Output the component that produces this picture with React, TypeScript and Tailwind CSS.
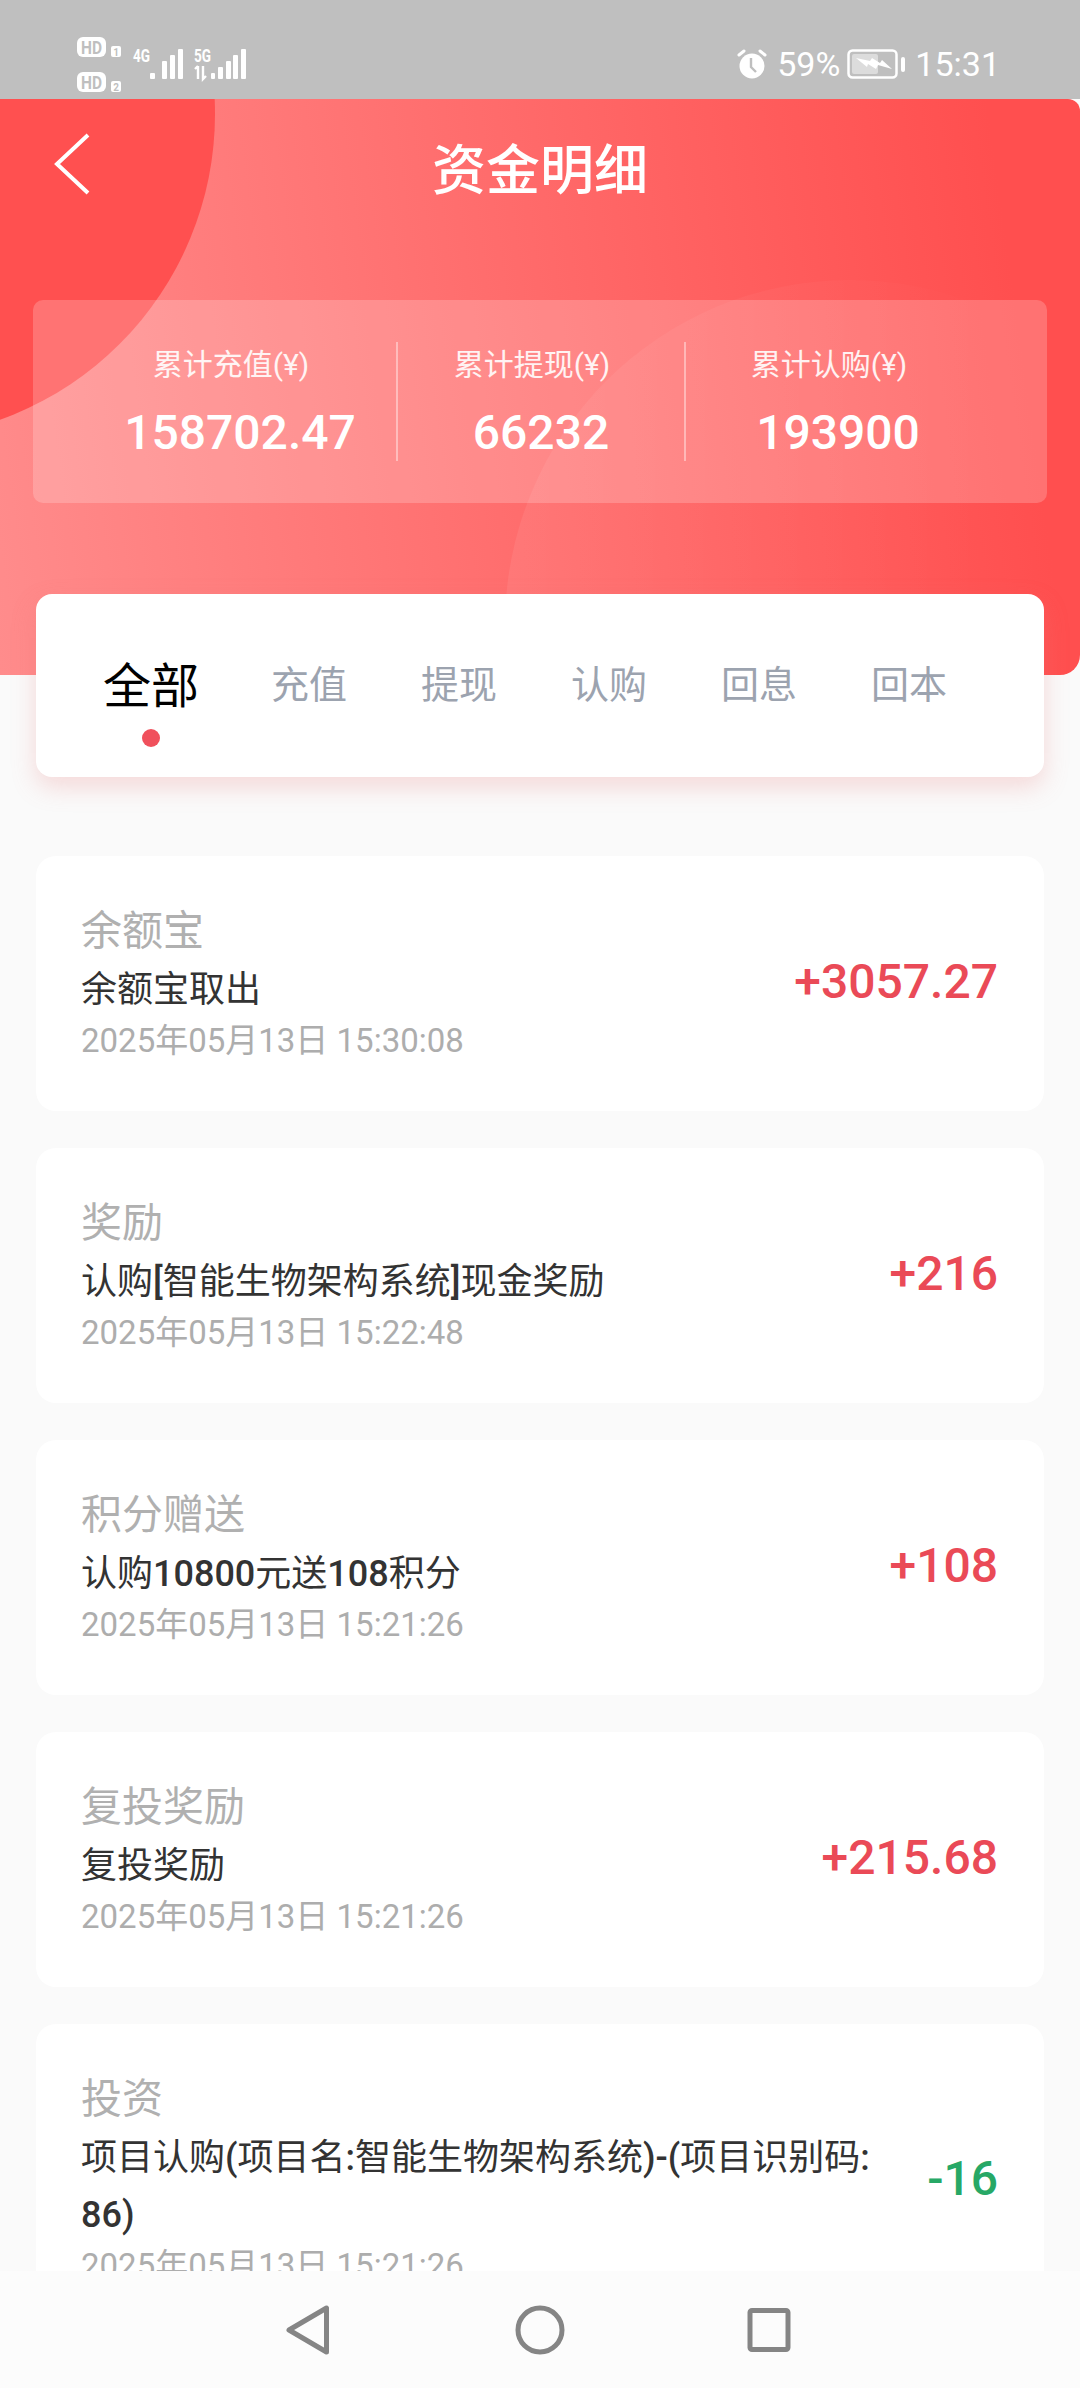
const font = { fontFamily: "Roboto, 'Noto Sans CJK SC', sans-serif" };

const stats = [
  { label: "累计充值(¥)", value: "158702.47" },
  { label: "累计提现(¥)", value: "66232" },
  { label: "累计认购(¥)", value: "193900" },
];

const tabs = ["充值", "提现", "认购", "回息", "回本"];

const records = [
  { title: "余额宝", desc: "余额宝取出", date: "2025年05月13日 15:30:08", amount: "+3057.27" },
  { title: "奖励", desc: "认购[智能生物架构系统]现金奖励", date: "2025年05月13日 15:22:48", amount: "+216" },
  { title: "积分赠送", desc: "认购10800元送108积分", date: "2025年05月13日 15:21:26", amount: "+108" },
  { title: "复投奖励", desc: "复投奖励", date: "2025年05月13日 15:21:26", amount: "+215.68" },
  { title: "投资", desc: "项目认购(项目名:智能生物架构系统)-(项目识别码:\n86)", date: "2025年05月13日 15:21:26", amount: "-16" },
];

// latin runs in the description sit a weight above the chinese
function Desc({ text }: { text: string }) {
  return (
    <>
      {text.split(/([\x20-\x7e]+)/).map((part, i) =>
        i % 2 === 1 ? <span key={i} className="font-medium">{part}</span> : part
      )}
    </>
  );
}

function SimIcons() {
  return (
    <svg width="170" height="60" viewBox="0 0 170 60" fill="white" style={{ fontFamily: "Roboto, sans-serif" }}>
      <rect x="0" y="0" width="29" height="20" rx="6" />
      <text x="4" y="16.5" textLength="21" lengthAdjust="spacingAndGlyphs" fontSize="18" fontWeight="700" fill="#bfbfbf">HD</text>
      <rect x="34" y="9" width="10" height="11" rx="2" />
      <text x="39" y="18.5" textAnchor="middle" fontSize="10" fontWeight="700" fill="#bfbfbf">1</text>
      <rect x="0" y="35" width="29" height="20" rx="6" />
      <text x="4" y="51.5" textLength="21" lengthAdjust="spacingAndGlyphs" fontSize="18" fontWeight="700" fill="#bfbfbf">HD</text>
      <rect x="34" y="44" width="10" height="11" rx="2" />
      <text x="39" y="53.5" textAnchor="middle" fontSize="10" fontWeight="700" fill="#bfbfbf">2</text>
      <text x="56" y="25" textLength="17" lengthAdjust="spacingAndGlyphs" fontSize="19" fontWeight="700">4G</text>
      <rect x="73" y="36" width="5" height="6" rx="1" />
      <rect x="85" y="24" width="5" height="18" rx="1" />
      <rect x="93" y="18" width="5" height="24" rx="1" />
      <rect x="101" y="12" width="5" height="30" rx="1" />
      <text x="117" y="25" textLength="17" lengthAdjust="spacingAndGlyphs" fontSize="19" fontWeight="700">5G</text>
      <path d="M121 29v13M118 32l3-3M126 29v13l3-3" stroke="white" strokeWidth="2.4" fill="none" />
      <rect x="134" y="36" width="4" height="6" rx="1" />
      <rect x="141" y="30" width="5" height="12" rx="1" />
      <rect x="149" y="24" width="5" height="18" rx="1" />
      <rect x="156" y="18" width="5" height="24" rx="1" />
      <rect x="164" y="12" width="5" height="30" rx="1" />
    </svg>
  );
}

function AlarmIcon() {
  return (
    <svg width="30" height="30" viewBox="0 0 30 30">
      <circle cx="15" cy="17" r="12.5" fill="white" />
      <path d="M14 9v9l5 5" stroke="#bfbfbf" strokeWidth="2.4" fill="none" />
      <path d="M2 6l5-4M28 6l-5-4" stroke="white" strokeWidth="3" strokeLinecap="round" fill="none" />
    </svg>
  );
}

function BatteryIcon() {
  return (
    <svg width="59" height="30" viewBox="0 0 59 30">
      <rect x="1.5" y="1.5" width="48" height="27" rx="4" fill="none" stroke="white" strokeWidth="2.5" />
      <rect x="5" y="5" width="26" height="20" rx="2" fill="white" opacity="0.45" />
      <rect x="54" y="8" width="4" height="15" rx="2" fill="white" />
      <path d="M9 9l14 3 2-3 8 5 2-3 10 9-14-4-2 4-8-5-1 3z" fill="white" />
    </svg>
  );
}

export default function App() {
  return (
    <div className="flex h-[2388px] w-[1080px] flex-col overflow-hidden bg-[#fafafa]" style={font}>
      <div className="flex h-[99px] shrink-0 items-start justify-between bg-[#bfbfbf] pl-[77px] pr-[80px] pt-[37px] text-white">
        <SimIcons />
        <div className="mt-[12px] flex items-center text-[34px] leading-[30px]">
          <AlarmIcon />
          <span className="ml-[10px]">59%</span>
          <span className="ml-[7px]"><BatteryIcon /></span>
          <span className="ml-[9px]">15:31</span>
        </div>
      </div>

      <div className="relative -mb-px h-[576px] shrink-0 overflow-hidden rounded-br-[20px] rounded-tr-[12px] bg-[linear-gradient(82deg,#ff8c8c_0%,#ff6e6e_45%,#ff4f4f_92%)]">
        <div className="absolute left-[-435px] top-[-310px] h-[650px] w-[650px] rounded-full bg-[#ff5050]" />
        <div className="absolute left-[505px] top-[181px] h-[690px] w-[690px] rounded-full bg-[linear-gradient(90deg,rgba(255,255,255,0.07),rgba(255,255,255,0)_70%)]" />

        <div className="relative flex h-[144px] items-center justify-center text-white">
          <svg className="absolute left-[52px] top-[34px]" width="40" height="62" viewBox="0 0 40 62" fill="none" stroke="white" strokeWidth="4">
            <path d="M36 2L5 31l31 29" />
          </svg>
          <span className="text-[54px] font-medium">资金明细</span>
        </div>

        <div className="relative mx-[33px] mt-[57px] grid h-[203px] grid-cols-[363px_288px_1fr] items-center rounded-[10px] bg-white/20">
          {stats.map((s, i) => (
            <div key={s.label} className={i === 0 ? "flex h-[119px] flex-col items-center justify-center pl-[51px] pt-[4px]" : i === 1 ? "flex h-[119px] flex-col items-center justify-center border-l-2 border-white/40 pt-[4px]" : "flex h-[119px] flex-col items-center justify-center border-l-2 border-white/40 pr-[57px] pt-[4px]"}>
              <span className="pr-[18px] text-[30px] leading-[40px] text-white/90">{s.label}</span>
              <span className="mt-[18px] text-[48px] font-medium leading-[60px] text-white">{s.value}</span>
            </div>
          ))}
        </div>
      </div>

      <div className="relative z-10 mx-[36px] -mt-[80px] flex h-[183px] shrink-0 items-start rounded-[16px] bg-white pl-[67px] pt-[63px] shadow-[0_10px_24px_rgba(230,120,120,0.25)]">
        <div className="flex w-[96px] flex-col items-center">
          <span className="whitespace-nowrap text-[48px] leading-[60px] text-black">全部</span>
          <span className="mt-[12px] h-[18px] w-[18px] rounded-full bg-[#f0505c]" />
        </div>
        <div className="ml-[72px] flex gap-[74px] pt-[5px]">
          {tabs.map((t) => (
            <span key={t} className="whitespace-nowrap text-[38px] leading-[46px] text-[#9ca3af]">{t}</span>
          ))}
        </div>
      </div>

      <div className="mx-[36px] mt-[79px] flex min-h-0 flex-1 flex-col gap-[37px] overflow-hidden">
        {records.map((r) => (
          <div key={r.date + r.title} className="flex shrink-0 items-center rounded-[20px] bg-white pb-[48px] pl-[45px] pr-[46px] pt-[45px]">
            <div className="min-w-0 flex-1 pr-[30px]">
              <div className="text-[41px] leading-[61px] text-[#b0b0b0]">{r.title}</div>
              <div className="whitespace-pre-line text-[36px] leading-[57px] text-[#333333]"><Desc text={r.desc} /></div>
              <div className="text-[33px] leading-[44px] text-[#adadad]">{r.date}</div>
            </div>
            <div className={r.amount.startsWith("-") ? "text-[48px] font-medium text-[#27a866]" : "text-[48px] font-medium text-[#ea4a57]"}>
              {r.amount}
            </div>
          </div>
        ))}
      </div>

      <div className="flex h-[117px] shrink-0 items-start justify-center bg-[#fcfcfc] pt-[32px]">
        <svg width="520" height="56" viewBox="0 0 520 56" fill="none" stroke="#858585" strokeWidth="5" strokeLinejoin="round">
          <path d="M46.5 5v44L9 27z" />
          <circle cx="260" cy="27" r="22" />
          <rect x="470" y="7.5" width="38" height="39" rx="2" />
        </svg>
      </div>
    </div>
  );
}
